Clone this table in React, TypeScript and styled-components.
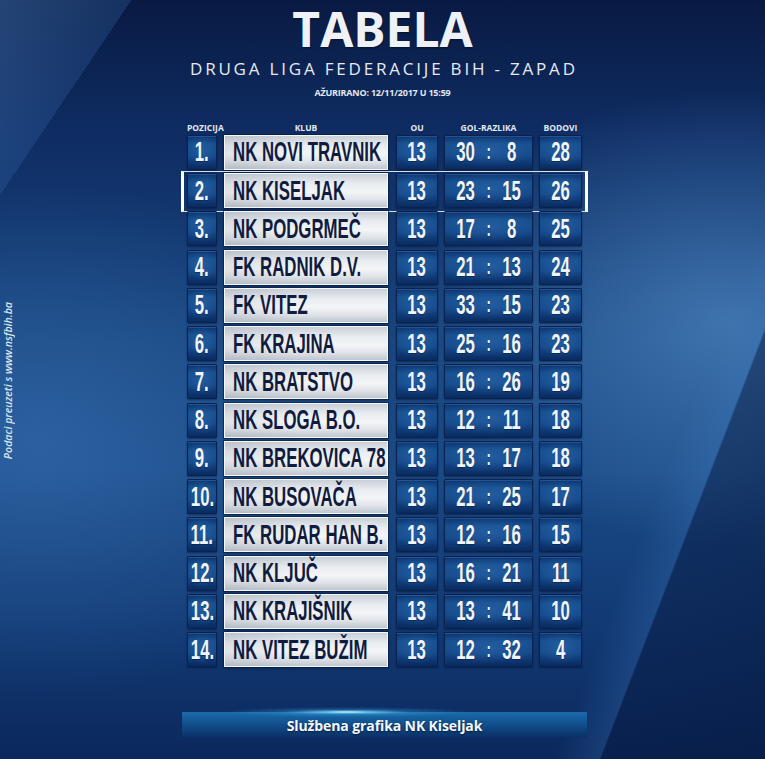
import React from "react";
import styled, { createGlobalStyle, css } from "styled-components";

const GlobalStyle = createGlobalStyle`
  html, body { margin: 0; padding: 0; background: #0c2a5e; }
  body { width: 765px; height: 759px; overflow: hidden; font-family: "Open Sans", "Liberation Sans", sans-serif; }
`;

const Page = styled.div`
  position: relative;
  width: 765px;
  height: 759px;
  box-sizing: border-box;
  display: flex;
  flex-direction: column;
  align-items: center;
  overflow: hidden;
  background:
    linear-gradient(124deg, rgba(70, 120, 180, 0.45) 0%, rgba(50, 100, 165, 0.3) 10.3%, transparent 10.3%),
    linear-gradient(111deg, transparent 80%, rgba(60, 120, 190, 0.25) 84.3%, rgba(6, 22, 60, 0.45) 84.5%, rgba(6, 22, 60, 0.55) 100%),
    radial-gradient(ellipse 55% 40% at 95% 42%, rgba(95, 155, 215, 0.55), transparent 75%),
    radial-gradient(ellipse 60% 45% at 5% 58%, rgba(70, 130, 200, 0.4), transparent 75%),
    linear-gradient(to bottom, #091a42 0%, #0f2d64 18%, #18467f 45%, #1a4a86 62%, #123a74 82%, #0b285c 100%);
`;

const Title = styled.h1`
  margin: 0;
  font: 700 48px/58px "Open Sans", sans-serif;
  color: #eef1f5;
  text-shadow: 0 1px 2px rgba(0, 0, 0, 0.45);
`;

const Subtitle = styled.h2`
  margin: 1.4px 0 0;
  padding-left: 2.8px;
  font: 400 17px/20px "Open Sans", sans-serif;
  letter-spacing: 2.8px;
  color: #e6eaf0;
`;

const Updated = styled.div`
  margin-top: 7.6px;
  font: 700 9px/12px "Open Sans", sans-serif;
  letter-spacing: -0.2px;
  color: #e3e8ef;
`;

const Table = styled.div`
  margin: 24px 0 0 4px;
  display: flex;
  flex-direction: column;
  width: 395px;
`;

const HeaderRow = styled.div`
  display: flex;
  gap: 6px;
  height: 10px;
  margin-bottom: 2px;
`;

const HeadLabel = styled.div<{ $w: number; $ml?: number; $mr?: number }>`
  width: ${(p) => p.$w}px;
  margin-left: ${(p) => p.$ml ?? 0}px;
  margin-right: ${(p) => p.$mr ?? 0}px;
  text-align: center;
  font: 700 8.5px/10px "Open Sans", sans-serif;
  color: #e2e8f0;
  white-space: nowrap;
`;

const Rows = styled.div`
  display: flex;
  flex-direction: column;
  gap: 3.25px;
`;

const Row = styled.div<{ $active?: boolean }>`
  position: relative;
  display: flex;
  gap: 6px;
  height: 35px;
  ${(p) =>
    p.$active &&
    css`
      &::before {
        content: "";
        position: absolute;
        top: -2.5px;
        bottom: -3.5px;
        left: -6px;
        right: -5.7px;
        border-left: 3px solid #ffffff;
        border-right: 3px solid #ffffff;
        border-top: 1px solid rgba(235, 242, 250, 0.9);
        border-bottom: 1px solid rgba(235, 242, 250, 0.9);
        pointer-events: none;
      }
    `}
`;

const blueCell = css`
  box-sizing: border-box;
  height: 35px;
  display: flex;
  align-items: center;
  justify-content: center;
  border: 1px solid #0a2250;
  border-radius: 1px;
  background:
    radial-gradient(ellipse 70% 60% at 50% 45%, rgba(45, 105, 175, 0.55), transparent 80%),
    linear-gradient(to bottom, #0d3570 0%, #17508f 25%, #15498a 60%, #0c336c 88%, #0a2a5e 100%);
  box-shadow: inset 0 1px 0 rgba(110, 160, 225, 0.25), 0 1px 2px rgba(0, 10, 35, 0.45);
  color: #f1f4f8;
`;

const BlueCell = styled.div<{ $w: number }>`
  ${blueCell};
  width: ${(p) => p.$w}px;
  flex: none;
`;

const ClubCell = styled.div`
  box-sizing: border-box;
  flex: none;
  width: 164px;
  height: 35px;
  margin: 0 2px 0 1px;
  padding-left: 8px;
  display: flex;
  align-items: center;
  overflow: visible;
  border: 1px solid #f5f7fa;
  background:
    linear-gradient(to right, rgba(90, 100, 115, 0.12), transparent 45%),
    linear-gradient(to bottom, #c9cfd7 0%, #e9edf1 30%, #f3f5f7 55%, #dfe3e8 78%, #bfc6cf 100%);
  box-shadow: 0 0 0 1px rgba(8, 25, 60, 0.55), 0 1px 3px rgba(0, 0, 0, 0.4);
  color: #111b3e;
`;

const GolCell = styled.div`
  ${blueCell};
  flex: none;
  width: 89px;
  display: grid;
  grid-template-columns: 1fr 6px 1fr;
  justify-items: center;
`;

const Cond = styled.span<{ $origin?: string; $size?: number }>`
  display: inline-block;
  font-family: "Liberation Sans", Arial, sans-serif;
  font-weight: 700;
  font-size: ${(p) => p.$size ?? 28}px;
  line-height: 1;
  white-space: nowrap;
  transform: scaleX(0.6);
  transform-origin: ${(p) => p.$origin ?? "center"};
`;

const BlueText = styled(Cond)`
  text-shadow: 0 1px 1px rgba(0, 0, 0, 0.35);
`;

const Footer = styled.div`
  position: relative;
  margin: 44.7px 0 0 4px;
  width: 405px;
  height: 26px;
  display: flex;
  align-items: center;
  justify-content: center;
  background: linear-gradient(to bottom, #1c6aa9 0%, #155c9b 25%, #0f447f 65%, #0b2f64 100%);
  &::before {
    content: "";
    position: absolute;
    top: -5px;
    left: 40px;
    width: 250px;
    height: 10px;
    background: radial-gradient(ellipse 50% 50% at 50% 50%, rgba(230, 255, 255, 1) 0%, rgba(120, 220, 255, 0.75) 18%, rgba(60, 170, 230, 0.3) 50%, transparent 100%);
    pointer-events: none;
  }
`;

const FooterText = styled.span`
  position: relative;
  font: 700 14px/17px "Open Sans", sans-serif;
  letter-spacing: -0.1px;
  color: #f4f7fb;
  text-shadow: 0 1px 2px rgba(0, 0, 0, 0.5);
  margin-top: 1px;
`;

const SideNote = styled.div`
  position: absolute;
  left: 2px;
  top: 302px;
  writing-mode: vertical-rl;
  transform: rotate(180deg);
  font: italic 600 10.6px/12px "Open Sans", sans-serif;
  color: #dbe4ef;
  white-space: nowrap;
`;

type Team = { pos: number; name: string; ou: number; gf: number; ga: number; pts: number };

const teams: Team[] = [
  { pos: 1, name: "NK NOVI TRAVNIK", ou: 13, gf: 30, ga: 8, pts: 28 },
  { pos: 2, name: "NK KISELJAK", ou: 13, gf: 23, ga: 15, pts: 26 },
  { pos: 3, name: "NK PODGRMEČ", ou: 13, gf: 17, ga: 8, pts: 25 },
  { pos: 4, name: "FK RADNIK D.V.", ou: 13, gf: 21, ga: 13, pts: 24 },
  { pos: 5, name: "FK VITEZ", ou: 13, gf: 33, ga: 15, pts: 23 },
  { pos: 6, name: "FK KRAJINA", ou: 13, gf: 25, ga: 16, pts: 23 },
  { pos: 7, name: "NK BRATSTVO", ou: 13, gf: 16, ga: 26, pts: 19 },
  { pos: 8, name: "NK SLOGA B.O.", ou: 13, gf: 12, ga: 11, pts: 18 },
  { pos: 9, name: "NK BREKOVICA 78", ou: 13, gf: 13, ga: 17, pts: 18 },
  { pos: 10, name: "NK BUSOVAČA", ou: 13, gf: 21, ga: 25, pts: 17 },
  { pos: 11, name: "FK RUDAR HAN B.", ou: 13, gf: 12, ga: 16, pts: 15 },
  { pos: 12, name: "NK KLJUČ", ou: 13, gf: 16, ga: 21, pts: 11 },
  { pos: 13, name: "NK KRAJIŠNIK", ou: 13, gf: 13, ga: 41, pts: 10 },
  { pos: 14, name: "NK VITEZ BUŽIM", ou: 13, gf: 12, ga: 32, pts: 4 },
];

export default function App() {
  return (
    <>
      <GlobalStyle />
      <Page>
        <SideNote>Podaci preuzeti s www.nsfbih.ba</SideNote>
        <Title>TABELA</Title>
        <Subtitle>DRUGA LIGA FEDERACIJE BIH - ZAPAD</Subtitle>
        <Updated>AŽURIRANO: 12/11/2017 U 15:59</Updated>
        <Table>
          <HeaderRow>
            <HeadLabel $w={30}>POZICIJA</HeadLabel>
            <HeadLabel $w={164} $ml={1} $mr={2}>KLUB</HeadLabel>
            <HeadLabel $w={42}>OU</HeadLabel>
            <HeadLabel $w={89}>GOL-RAZLIKA</HeadLabel>
            <HeadLabel $w={43}>BODOVI</HeadLabel>
          </HeaderRow>
          <Rows>
            {teams.map((t) => (
              <Row key={t.pos} $active={t.name === "NK KISELJAK"}>
                <BlueCell $w={30}>
                  <BlueText>{t.pos}.</BlueText>
                </BlueCell>
                <ClubCell>
                  <Cond $origin="left center">{t.name}</Cond>
                </ClubCell>
                <BlueCell $w={42}>
                  <BlueText>{t.ou}</BlueText>
                </BlueCell>
                <GolCell>
                  <BlueText>{t.gf}</BlueText>
                  <BlueText $size={22}>:</BlueText>
                  <BlueText>{t.ga}</BlueText>
                </GolCell>
                <BlueCell $w={43}>
                  <BlueText>{t.pts}</BlueText>
                </BlueCell>
              </Row>
            ))}
          </Rows>
        </Table>
        <Footer>
          <FooterText>Službena grafika NK Kiseljak</FooterText>
        </Footer>
      </Page>
    </>
  );
}
